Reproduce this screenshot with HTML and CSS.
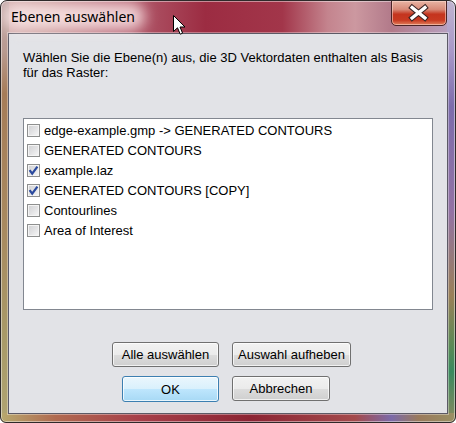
FILE: index.html
```html
<!DOCTYPE html>
<html lang="de">
<head>
<meta charset="utf-8">
<title>Ebenen auswählen</title>
<link rel="stylesheet" href="styles.css">
</head>
<body>
<div class="window">
  <div class="titlebar">
    <span class="title">Ebenen auswählen</span>
    <button class="close" aria-label="Schließen">
      <svg width="56" height="26" viewBox="0 0 56 26">
        <path d="M21.5 7.5 L34.5 18 M34.5 7.5 L21.5 18" stroke="#3a2424" stroke-width="5.6" stroke-linecap="square" fill="none"/>
        <path d="M21.5 7.5 L34.5 18 M34.5 7.5 L21.5 18" stroke="#ffffff" stroke-width="3.4" stroke-linecap="square" fill="none"/>
      </svg>
    </button>
  </div>
  <div class="client">
    <p class="prompt">Wählen Sie die Ebene(n) aus, die 3D Vektordaten enthalten als Basis<br>für das Raster:</p>
    <ul class="list">
      <li class="item"><span class="check"></span>edge-example.gmp -&gt; GENERATED CONTOURS</li>
      <li class="item"><span class="check"></span>GENERATED CONTOURS</li>
      <li class="item"><span class="check"><svg width="11" height="11" viewBox="0 0 11 11"><path d="M1.6 5.2 L4.2 8.6 L9.4 1.6" stroke="#2b4a9e" stroke-width="2.2" fill="none"/></svg></span>example.laz</li>
      <li class="item"><span class="check"><svg width="11" height="11" viewBox="0 0 11 11"><path d="M1.6 5.2 L4.2 8.6 L9.4 1.6" stroke="#2b4a9e" stroke-width="2.2" fill="none"/></svg></span>GENERATED CONTOURS [COPY]</li>
      <li class="item"><span class="check"></span>Contourlines</li>
      <li class="item"><span class="check"></span>Area of Interest</li>
    </ul>
    <div class="buttons">
      <button class="btn btn-wide-a">Alle auswählen</button>
      <button class="btn btn-wide-b">Auswahl aufheben</button>
      <button class="btn btn-ok">OK</button>
      <button class="btn btn-cancel">Abbrechen</button>
    </div>
  </div>
  <svg class="cursor" width="13" height="21" viewBox="0 0 13 21">
    <path d="M0.5 0.5 L0.5 16.5 L4.5 12.8 L7.2 19.2 L9.6 18.2 L7 12 L12 12 Z" fill="#ffffff" stroke="#000000" stroke-width="1"/>
  </svg>
</div>
</body>
</html>
```

FILE: styles.css
```css
html, body {
  margin: 0;
  padding: 0;
  background: #ffffff;
}

.window {
  position: relative;
  width: 456px;
  height: 423px;
  box-sizing: border-box;
  border: 1px solid #2e2a2a;
  border-radius: 7px 7px 6px 6px;
  padding: 0 7px 8px 7px;
  display: flex;
  flex-direction: column;
  overflow: hidden;
  box-shadow: inset 0 0 0 1px rgba(255, 255, 255, 0.45);
  background:
    linear-gradient(to right, #b7a96e 0%, #b06a50 12%, #a8404a 30%, #8c2434 55%, #a44a4c 78%, #7c6aa8 86%, #9a7a5c 92%, #9a9064 100%) left bottom / 100% 9px no-repeat,
    linear-gradient(to bottom, #c4a8a8 0%, #b89a90 12%, #a67c58 22%, #a88a60 55%, #a89a68 80%, #b0a472 100%) left top / 8px 100% no-repeat,
    linear-gradient(to bottom, #c0b4d0 0%, #a898c8 12%, #7c6cac 25%, #9272a4 50%, #9a8058 70%, #5a8a56 82%, #3a8a5e 88%, #8a8a60 100%) right top / 8px 100% no-repeat,
    linear-gradient(to right, #d4b0b0 0%, #c89898 10%, #b66676 25%, #9c2c42 45%, #a2364a 62%, #c4848e 72%, #cc98a0 78%, #b27a8a 86%, #b8a4c4 100%);
}

.titlebar {
  height: 32px;
  display: flex;
  align-items: flex-start;
  justify-content: space-between;
}

.title {
  position: relative;
  margin-top: 6px;
  margin-left: 3px;
  font-family: "Noto Sans", "Open Sans", sans-serif;
  font-size: 14px;
  line-height: 19px;
  color: #000000;
  isolation: isolate;
}

.title::before {
  content: "";
  position: absolute;
  left: -8px;
  right: -10px;
  top: -4px;
  bottom: -4px;
  border-radius: 14px;
  background: rgba(255, 238, 238, 0.8);
  filter: blur(7px);
  z-index: -1;
}

.close {
  margin: -1px 1px 0 0;
  width: 56px;
  height: 26px;
  padding: 0;
  border: 1px solid #4a2426;
  border-radius: 0 0 5px 5px;
  background: linear-gradient(to bottom, #e8b4a4 0%, #d88a78 35%, #c4341e 55%, #c83a22 80%, #e0805c 100%);
  box-shadow: inset 0 0 0 1px rgba(255, 220, 210, 0.55);
  display: flex;
  align-items: center;
  justify-content: center;
}

.close svg {
  display: block;
  margin: -1px 0 0 -1px;
}

.client {
  flex: 1;
  background: #e2e3e7;
  border: 1px solid #5c5a66;
  box-shadow: 0 0 0 1px rgba(255, 255, 255, 0.35);
  padding: 17px 14px 0 14px;
  font-family: "Liberation Sans", Arial, sans-serif;
  font-size: 13px;
  color: #000000;
  display: flex;
  flex-direction: column;
}

.prompt {
  margin: 0;
  line-height: 14.5px;
}

.list {
  list-style: none;
  box-sizing: border-box;
  margin: 38px 0 0 0;
  padding: 2px 0 0 3px;
  height: 192px;
  background: #ffffff;
  border: 1px solid #828790;
}

.item {
  height: 20px;
  line-height: 20px;
  display: flex;
  align-items: flex-start;
  white-space: nowrap;
}

.check {
  width: 13px;
  height: 13px;
  box-sizing: border-box;
  margin: 3px 4px 0 0;
  border: 1px solid #8e8f8f;
  background: linear-gradient(135deg, #cfd0d2 0%, #e2e2e4 50%, #f8f8f8 100%);
  box-shadow: inset 0 0 0 1px #f4f4f4;
  display: flex;
  align-items: center;
  justify-content: center;
}

.check svg {
  display: block;
}

.buttons {
  margin-top: 32px;
  padding-right: 5px;
  display: grid;
  grid-template-columns: 1fr 1fr;
  column-gap: 13px;
  row-gap: 9px;
}

.btn {
  height: 25px;
  padding: 0;
  font-family: "Liberation Sans", Arial, sans-serif;
  font-size: 13px;
  color: #000000;
  border: 1px solid #707070;
  border-radius: 3px;
  background: linear-gradient(to bottom, #f2f2f2 0%, #ebebeb 50%, #dddddd 51%, #cfcfcf 100%);
  box-shadow: inset 0 0 0 1px rgba(255, 255, 255, 0.7);
}

.btn-wide-a {
  justify-self: end;
  width: 107px;
}

.btn-wide-b {
  justify-self: start;
  width: 119px;
}

.btn-ok {
  justify-self: end;
  width: 97px;
  height: 26px;
  border-color: #3c7fb1;
  background: linear-gradient(to bottom, #eaf6fd 0%, #d9f0fc 50%, #bee6fd 51%, #a7d9f5 100%);
  box-shadow: inset 0 0 0 1px rgba(255, 255, 255, 0.75);
}

.btn-cancel {
  justify-self: start;
  width: 98px;
}

.cursor {
  position: absolute;
  left: 172px;
  top: 14px;
}
```
